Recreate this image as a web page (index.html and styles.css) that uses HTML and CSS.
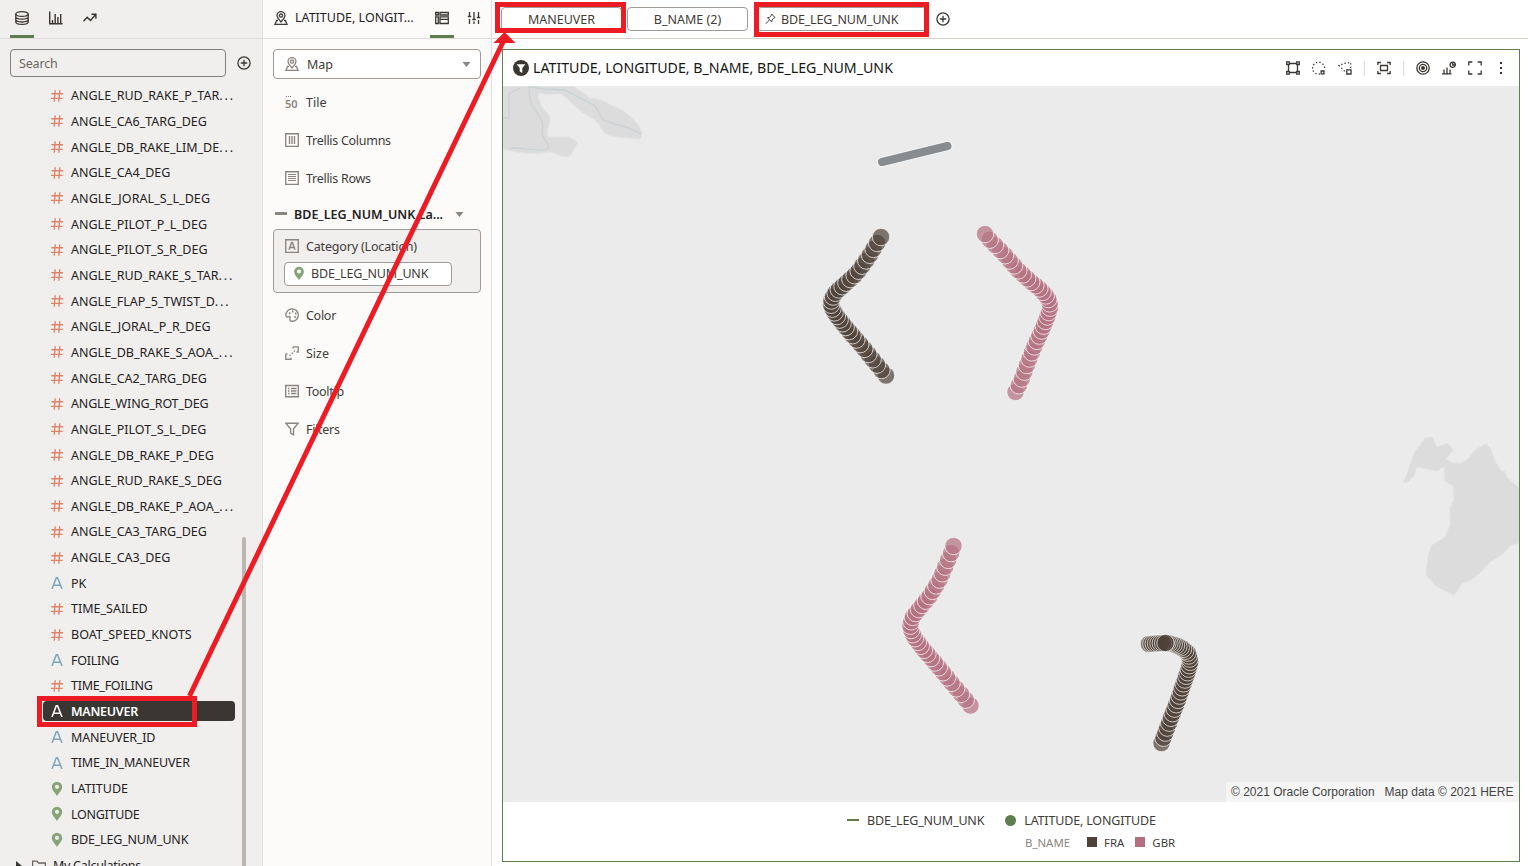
FILE: index.html
```
<!DOCTYPE html>
<html lang="en">
<head>
<meta charset="utf-8">
<title>Map visualization</title>
<link rel="stylesheet" href="styles.css">
</head>
<body>
<svg class="defs" width="0" height="0">
  <symbol id="num" viewBox="0 0 12 12"><path d="M4.2 .3 3.2 11.7M8.8 .3 7.8 11.7M.4 3.7H12M0 8.3H11.6" fill="none" stroke="currentColor" stroke-width="1.35"/></symbol>
  <symbol id="attr" viewBox="0 0 12 12"><path d="M1 12 5.3.7H6.5L11 12M2.7 8.3H9.4" fill="none" stroke="currentColor" stroke-width="1.5"/></symbol>
  <symbol id="pin" viewBox="0 0 12 16"><path fill-rule="evenodd" d="M6 .8A5.2 5.2 0 0 0 .8 6C.8 9.2 4 11.6 6 15 8 11.6 11.2 9.2 11.2 6A5.2 5.2 0 0 0 6 .8ZM6 3.7A2.1 2.1 0 1 1 6 7.9 2.1 2.1 0 0 1 6 3.7Z" fill="currentColor"/></symbol>
  <symbol id="plus" viewBox="0 0 14 14"><g fill="none" stroke="currentColor" stroke-width="1.3"><circle cx="7" cy="7" r="6.1"/><path d="M7 3.8V10.2M3.8 7H10.2"/></g></symbol>
  <symbol id="mapicon" viewBox="0 0 14 14"><g fill="none" stroke="currentColor" stroke-width="1.3"><path d="M7 11C5.800 8.900 3 7.300 3 4.600A4 4 0 0 1 11 4.600C11 7.300 8.200 8.900 7 11Z"/><circle cx="7" cy="4.600" r="1.600"/><path d="M4 9.500H2.600L1 13.300H13L11.400 9.500H10"/></g></symbol>
</svg>
<div class="app">
  <aside class="data">
    <header class="bar">
      <span class="tab on"><svg width="16" height="16" viewBox="0 0 16 16" fill="none" stroke="#3a3632" stroke-width="1.3"><ellipse cx="8" cy="4" rx="6.200" ry="2.400"/><path d="M1.800 4V12C1.800 15.200 14.200 15.200 14.200 12V4M1.800 6.800C1.800 10 14.200 10 14.200 6.800M1.800 9.600C1.800 12.800 14.200 12.800 14.200 9.600"/></svg></span>
      <span class="tab"><svg width="16" height="16" viewBox="0 0 16 16" fill="none" stroke="#3a3632" stroke-width="1.400"><path d="M1.700 1.500V13.800H14.500M4.500 13V10M7.200 13V4M9.900 13V7M12.700 13V4"/></svg></span>
      <span class="tab"><svg width="16" height="16" viewBox="0 0 16 16" fill="none" stroke="#3a3632" stroke-width="1.400"><path d="M1.500 11.300 5.200 7.200 8.500 10.500 13.600 4.500M9.500 4.300H13.900V8.700"/></svg></span>
    </header>
    <div class="find"><div class="search">Search</div><svg width="14" height="14"><use href="#plus"/></svg></div>
    <div class="rows">
      <div class="row n"><svg><use href="#num"/></svg><span>ANGLE_RUD_RAKE_P_TAR<span class="more">...</span></span></div>
      <div class="row n"><svg><use href="#num"/></svg><span>ANGLE_CA6_TARG_DEG</span></div>
      <div class="row n"><svg><use href="#num"/></svg><span>ANGLE_DB_RAKE_LIM_DE<span class="more">...</span></span></div>
      <div class="row n"><svg><use href="#num"/></svg><span>ANGLE_CA4_DEG</span></div>
      <div class="row n"><svg><use href="#num"/></svg><span class="wide">ANGLE_JORAL_S_L_DEG</span></div>
      <div class="row n"><svg><use href="#num"/></svg><span>ANGLE_PILOT_P_L_DEG</span></div>
      <div class="row n"><svg><use href="#num"/></svg><span>ANGLE_PILOT_S_R_DEG</span></div>
      <div class="row n"><svg><use href="#num"/></svg><span>ANGLE_RUD_RAKE_S_TAR<span class="more">...</span></span></div>
      <div class="row n"><svg><use href="#num"/></svg><span>ANGLE_FLAP_5_TWIST_D<span class="more">...</span></span></div>
      <div class="row n"><svg><use href="#num"/></svg><span>ANGLE_JORAL_P_R_DEG</span></div>
      <div class="row n"><svg><use href="#num"/></svg><span>ANGLE_DB_RAKE_S_AOA_<span class="more">...</span></span></div>
      <div class="row n"><svg><use href="#num"/></svg><span>ANGLE_CA2_TARG_DEG</span></div>
      <div class="row n"><svg><use href="#num"/></svg><span class="narrow">ANGLE_WING_ROT_DEG</span></div>
      <div class="row n"><svg><use href="#num"/></svg><span>ANGLE_PILOT_S_L_DEG</span></div>
      <div class="row n"><svg><use href="#num"/></svg><span>ANGLE_DB_RAKE_P_DEG</span></div>
      <div class="row n"><svg><use href="#num"/></svg><span>ANGLE_RUD_RAKE_S_DEG</span></div>
      <div class="row n"><svg><use href="#num"/></svg><span>ANGLE_DB_RAKE_P_AOA_<span class="more">...</span></span></div>
      <div class="row n"><svg><use href="#num"/></svg><span>ANGLE_CA3_TARG_DEG</span></div>
      <div class="row n"><svg><use href="#num"/></svg><span>ANGLE_CA3_DEG</span></div>
      <div class="row a"><svg><use href="#attr"/></svg><span>PK</span></div>
      <div class="row n"><svg><use href="#num"/></svg><span>TIME_SAILED</span></div>
      <div class="row n"><svg><use href="#num"/></svg><span>BOAT_SPEED_KNOTS</span></div>
      <div class="row a"><svg><use href="#attr"/></svg><span class="tight">FOILING</span></div>
      <div class="row n"><svg><use href="#num"/></svg><span class="tight">TIME_FOILING</span></div>
      <div class="row a sel"><svg><use href="#attr"/></svg><span class="tight">MANEUVER</span></div>
      <div class="row a"><svg><use href="#attr"/></svg><span class="narrow">MANEUVER_ID</span></div>
      <div class="row a"><svg><use href="#attr"/></svg><span class="narrow">TIME_IN_MANEUVER</span></div>
      <div class="row p"><svg><use href="#pin"/></svg><span>LATITUDE</span></div>
      <div class="row p"><svg><use href="#pin"/></svg><span class="tight">LONGITUDE</span></div>
      <div class="row p"><svg><use href="#pin"/></svg><span class="narrow">BDE_LEG_NUM_UNK</span></div>
      <div class="row calc"><svg class="caret" viewBox="0 0 6 10"><path d="M0 0 6 5 0 10Z" fill="#3a3632"/></svg><svg class="folder" viewBox="0 0 14 12"><path d="M.6 11.400V1.200H5L6.500 3H13.400V11.400Z" fill="none" stroke="#6b6661" stroke-width="1.300"/></svg><span class="tight">My Calculations</span></div>
    </div>
    <i class="thumb"></i>
  </aside>

  <section class="grammar">
    <header class="bar">
      <svg class="mi" width="14" height="14"><use href="#mapicon"/></svg>
      <span class="vizname">LATITUDE, LONGIT…</span>
      <span class="tab on"><svg width="14" height="14" viewBox="0 0 14 14" fill="none" stroke="#3a3632" stroke-width="1.300"><path d="M.7 1.500H3.300V4H.7ZM5 1.500H13.300V4H5ZM.7 5.800H3.300V12.500H.7ZM5 5.800H13.300V12.500H5ZM5 8.300H13.300"/></svg></span>
      <span class="tab sliders"><svg width="14" height="14" viewBox="0 0 14 14" fill="none" stroke="#3a3632" stroke-width="1.300"><path d="M2.500 1V5M2.500 8V13M.8 5.500H4.200M7 1V8M7 10.500V13M5.300 8.500H8.700M11.500 1V6M11.500 9V13M9.800 6.500H13.200"/></svg></span>
    </header>
    <div class="select"><svg width="14" height="14"><use href="#mapicon"/></svg><span>Map</span><svg class="dd" viewBox="0 0 8 5"><path d="M0 0H8L4 5Z" fill="#8b8580"/></svg></div>
    <div class="shelf"><span class="tileicon"><i></i>50</span><span>Tile</span></div>
    <div class="shelf"><svg viewBox="0 0 14 14"><path d="M.7.7H13.300V13.300H.7ZM4.500 3V11M7 3V11M9.500 3V11"/></svg><span class="tight">Trellis Columns</span></div>
    <div class="shelf"><svg viewBox="0 0 14 14"><path d="M.7.7H13.300V13.300H.7Z"/><path d="M3 3.500H11M3 5.500H11M3 7.500H11M3 9.500H11" stroke-width="1"/></svg><span class="tight">Trellis Rows</span></div>
    <div class="layer"><i></i><b>BDE_LEG_NUM_UNK La...</b><svg class="dd" viewBox="0 0 8 5"><path d="M0 0H8L4 5Z" fill="#8b8580"/></svg></div>
    <div class="category">
      <div class="cattitle"><svg viewBox="0 0 14 14"><path d="M.7.7H13.300V13.300H.7ZM4 10.700 6.600 3.500H7.400L10 10.700M5 8.500H9"/></svg><span class="narrow">Category (Location)</span></div>
      <div class="chip"><svg width="12" height="15"><use href="#pin"/></svg><span class="narrow">BDE_LEG_NUM_UNK</span></div>
    </div>
    <div class="shelf"><svg viewBox="0 0 14 14"><path d="M1 5.500C2 2.500 4.500.8 7.500.8A6.200 6.200 0 0 1 13.300 7C13.300 10.500 10.500 13.200 7.300 13.200C5 13.200 4.300 11.700 5 10.300C5.700 8.800 4.500 8 3.200 8.800C1.500 9.700.5 8 1 5.500Z"/><path d="M4 5.200H5.500M7 3.500H8.500M10 5.500H11.500M9.300 9H10.800" stroke-width="1.800"/></svg><span class="tight">Color</span></div>
    <div class="shelf"><svg viewBox="0 0 14 14"><path d="M8 .8H13.200V6H11.500M.8 8V13.200H6V11.500M.8 8H2.500M8 .8V2.500"/><path d="M4.500 9.700 10 4.500" stroke-dasharray="1.500 1.500"/></svg><span>Size</span></div>
    <div class="shelf"><svg viewBox="0 0 14 14"><path d="M.7 1.500H13.300V12.700H.7ZM3 4.500H4.500M6 4.500H11.500M3 7H4.500M6 7H11.500M3 9.500H4.500M6 9.500H11.500"/></svg><span class="tight">Tooltip</span></div>
    <div class="shelf"><svg viewBox="0 0 14 14"><path d="M.9 1.200H13.100L8.500 7V12.800L5.600 11V7Z"/></svg><span class="tight">Filters</span></div>
  </section>

  <main class="canvas">
    <header class="filters">
      <span class="pill">MANEUVER</span><span class="pill">B_NAME (2)</span>
      <span class="pill pinned"><svg width="11" height="12" viewBox="0 0 11 12" fill="none" stroke="#4a4642"><path d="M6.500 1 10 4.500 8.800 5 7 7 6.800 9 2.500 4.700 4.600 4.400 6.300 2.500ZM4.500 6.800.8 10.800"/></svg><span class="narrow">BDE_LEG_NUM_UNK</span></span>
      <svg class="add" width="14" height="14"><use href="#plus"/></svg>
    </header>
    <article class="viz">
      <div class="vizbar">
        <svg class="funnel" width="16" height="16" viewBox="0 0 16 16"><circle cx="8" cy="8" r="8" fill="#3a3632"/><path d="M3.600 4.200H12.400L9.300 8V13L6.700 11.500V8Z" fill="#fff"/></svg>
        <h1>LATITUDE, LONGITUDE, B_NAME, BDE_LEG_NUM_UNK</h1>
        <div class="tools">
          <svg viewBox="0 0 14 14"><path d="M2.500 2.500H11.500V11.500H2.500Z"/><path d="M.7.9H3.300V3.500H.7ZM10.700.9H13.300V3.500H10.700ZM.7 10.500H3.300V13.100H.7ZM10.700 10.500H13.300V13.100H10.700Z" fill="#fff"/></svg>
          <svg viewBox="0 0 14 14"><path d="M8 13A6 6 0 1 1 12.500 8" stroke-dasharray="1.300 2.200"/><path d="M9.200 10H12V12.800H9.200Z"/></svg>
          <svg viewBox="0 0 14 14"><path d="M12.700 7V1.500L6 2.500 1 4.500 7 10.500" stroke-dasharray="1.300 2.200"/><path d="M8.800 8.800H13V13H8.800Z"/></svg>
          <i></i>
          <svg viewBox="0 0 14 14"><path d="M.8 4V1.500H4M10 1.500H13.200V4M13.200 10V12.500H10M4 12.500H.8V10M3.500 4.500H10.500V9.500H3.500Z"/></svg>
          <i></i>
          <svg viewBox="0 0 14 14"><circle cx="7" cy="7" r="6.200"/><circle cx="7" cy="7" r="3.700"/><circle cx="7" cy="7" r="1.300" fill="#3a3632"/></svg>
          <svg viewBox="0 0 14 14"><path d="M0 12.800H9.500M2 12.500V8.500M5 12.500V6.500M8 12.500V8.500"/><circle cx="10.700" cy="3.800" r="2.600"/><path d="M10.700 1V4H13.500"/></svg>
          <svg viewBox="0 0 14 14"><path d="M.8 4.500V1H4.300M9.700 1H13.200V4.500M13.200 9.500V13H9.700M4.300 13H.8V9.500"/></svg>
          <svg viewBox="0 0 14 14"><path d="M6 1H8V3H6ZM6 6H8V8H6ZM6 11H8V13H6Z" fill="#3a3632" stroke="none"/></svg>
        </div>
      </div>
      <div class="map">
        <svg class="mapsvg" viewBox="503 86 1016 716">
          <g fill="#dcdcdc" stroke="#e3e3e3" stroke-width="1" stroke-linejoin="round">
            <path d="M503 86H573Q580 91 587 95L590 99C596 97 602 100 609 104L624 111 637 123C643 131 642 137 640 139C630 138 614 138 606 134 C601 130 600 124 594 119 C579 113 570 100 562 94 C554 93 546 96 542 93 C536 92 538 97 540 103 C542 110 550 114 550 118 C550 126 546 129 548 137 L568 137 578 142 573 151 569 157 561 156 551 152 C532 155 518 153 503 149Z"/>
            <path d="M1403 483 1408 471 1414 453 1425 438 1432 437 1437 447 1448 443 1453 450 1446 459 1454 463H1462L1468 459 1476 449 1486 444 1491 449 1495 461 1501 471H1505L1507 477 1519 488V543L1510 546 1503 554 1490 562 1480 573 1471 580 1462 583 1458 590 1454 595 1445 591 1436 586 1426 575 1428 555 1432 545 1445 537 1450 525V508L1454 499 1453 486 1445 481 1444 466 1438 471 1417 467 1414 476 1408 482Z"/>
          </g>
          <path d="M503 118H509V94L520 88M529 86Q529 105 535 110C539 116 545 122 542 132C541 140 550 141 548 148C545 153 530 148 509 148M530 87 545 89 565 90 595 106 603 120 614 124 624 126 641 134" fill="none" stroke="#cbd2d6" stroke-width="1.400"/>
          <path d="M882 162 947.500 146" stroke="#f8f8f8" stroke-width="10" stroke-linecap="round"/>
          <path d="M882 162 947.500 146" stroke="#868c90" stroke-width="8" stroke-linecap="round"/>
          <g id="trails"></g>
        </svg>
        <div class="credit"><span>© 2021 Oracle Corporation</span><span>Map data © 2021 HERE</span></div>
      </div>
      <div class="legend">
        <div class="leg1"><i class="dash"></i><span class="narrow">BDE_LEG_NUM_UNK</span><i class="dot"></i><span class="narrow">LATITUDE, LONGITUDE</span></div>
        <div class="leg2"><span class="muted">B_NAME</span><i class="sq fra"></i><span>FRA</span><i class="sq gbr"></i><span>GBR</span></div>
      </div>
    </article>
  </main>
</div>
<svg class="marks" viewBox="0 0 1528 866" fill="none" stroke="#ed1c24" stroke-width="5">
  <rect x="497.500" y="4.500" width="126" height="26"/>
  <rect x="756.500" y="4.500" width="170" height="30"/>
  <rect x="39.500" y="698.500" width="155" height="26"/>
  <path d="M189.500 696 503 42"/>
  <path d="M504.500 32 515.500 43H493.500Z" fill="#ed1c24" stroke="none"/>
</svg>
<script src="trails.js"></script>
</body>
</html>
```
FILE: styles.css
```
*{box-sizing:border-box}
body{margin:0;width:1528px;height:866px;overflow:hidden;font:12.5px "Noto Sans",sans-serif;color:#24211f;background:#fff}
svg{flex:none;display:block}
.defs{position:absolute}
.narrow{letter-spacing:-.17px}
.tight{letter-spacing:-.28px}
.wide{letter-spacing:.08px}
.more{letter-spacing:1.9px}
.app{display:flex;height:866px}
.bar{height:39px;display:flex;border-bottom:1px solid #dfdcd9}
.tab{width:24px;height:38px;display:flex;align-items:center;justify-content:center;padding-bottom:2px}
.tab.on{border-bottom:3px solid #5f7d4f;padding-bottom:0}
.data{width:262px;background:#f0efed;position:relative;overflow:hidden;flex:none}
.data .bar{padding-left:10px;gap:10px}
.find{display:flex;align-items:center;gap:10.5px;padding:10px 0 0 10px;color:#3a3632}
.search{width:216px;height:28px;border:1px solid #85817d;border-radius:4px;padding-left:8px;line-height:28px;color:#6b6661;letter-spacing:-.15px}
.rows{padding-top:6px}
.row{height:25.66px;display:flex;align-items:center;padding-left:51px;white-space:nowrap}
.row svg{width:12px;height:12px;margin-right:8px}
.row.p svg{height:16px}
.n svg{color:#de8268}
.a svg{color:#7ba5be}
.p svg,.chip svg{color:#86a478}
.row.sel{color:#fff;font-weight:600;height:20px;margin:2.33px 27px 3.33px 43px;padding-left:8px;background:#3a3632;border-radius:4px}
.row.sel svg{color:#fff}
.row.calc{padding-left:16px}
.row.calc .caret{width:6px;height:10px;margin-right:10px}
.row.calc .folder{width:14px;height:12px;margin-right:7px}
.thumb{position:absolute;left:242px;top:537px;width:4px;height:340px;border-radius:2px;background:#bcb6b1}
.grammar{width:230px;background:#fcfbfa;border:solid #e0dfdd;border-width:0 1px;flex:none;color:#3f3b38}
.grammar .bar{padding-left:11px;align-items:flex-start}
.mi{margin-top:11px}
.vizname{width:142px;padding-left:7px;line-height:36px;color:#24211f;white-space:nowrap}
.bar .sliders{margin-left:8px}
.select{margin:10px 10px 4px;width:208px;height:30px;border:1px solid #a09b96;border-radius:4px;background:#fff;display:flex;align-items:center;padding:0 9px 0 11px;gap:8px}
.select>svg:first-child{color:#8b8580}
.dd{width:9px;height:5px}
.select .dd{margin-left:auto}
.shelf{height:38px;display:flex;align-items:center;padding-left:22px;gap:7px}
.shelf svg,.cattitle svg{width:14px;height:14px;fill:none;stroke:#8b8580;stroke-width:1.35}
.tileicon{width:14px;font-size:11px;font-weight:600;color:#8b8580;line-height:12px;position:relative;padding-top:3px}
.tileicon i{position:absolute;left:1px;top:1px;width:5px;border-top:1px dotted #8b8580}
.layer{height:32px;display:flex;align-items:center;padding:2px 0 0 12px;color:#24211f;white-space:nowrap}
.layer i{width:12px;height:3px;margin:-2px 7px 0 0;background:#8b8580}
.layer b{width:161px;font-weight:600}
.category{width:208px;height:64px;margin:0 10px 3px;border:1px solid #a09b96;border-radius:4px;background:#f0efed;padding:6px 0 0 10px}
.cattitle{display:flex;align-items:center;gap:7px;height:20px;padding-left:1px}
.chip{width:168px;height:24px;margin-top:6px;border:1px solid #a09b96;border-radius:4px;background:#fff;display:flex;align-items:center;padding:0 0 1px 8px;gap:6px}
.canvas{flex:1;min-width:0}
.filters{height:39px;border-bottom:1px solid #d4d1cb;display:flex;padding:7px 0 0 9px}
.pill{width:121px;height:24px;border:1px solid #a09b96;border-radius:4px;margin-right:5px;display:flex;align-items:center;justify-content:center;color:#3f3b38}
.pinned{width:170px;justify-content:flex-start;margin-left:4px;padding-left:7px;gap:5px}
.add{margin:5px 0 0 4px;color:#3a3632}
.viz{margin:10px 0 0 10px;width:1018px;height:813px;border:1px solid #5f7d4f;display:flex;flex-direction:column}
.vizbar{height:36px;display:flex;align-items:center;padding-left:10px}
h1{font-size:14.2px;font-weight:400;margin:0 0 1px 4px;white-space:nowrap;color:#161513}
.tools{display:flex;align-items:center;margin-left:auto;padding-right:11px;gap:12px}
.tools svg{width:14px;height:14px;fill:none;stroke:#3a3632;stroke-width:1.3}
.tools i{width:1px;height:15px;background:#dedbd8}
.map{height:716px;background:#ebebeb;position:relative}
.mapsvg{width:1016px;height:716px}
.credit{position:absolute;right:0;bottom:0;width:293px;height:20px;background:#f5f5f5;font:12px/20px "Liberation Sans",sans-serif;color:#444;display:flex;gap:10px;padding-left:5px;white-space:nowrap}
.legend{padding-top:7px;color:#3f3b38}
.leg1,.leg2{display:flex;align-items:center;height:22px}
.leg1{padding-left:344px}
.dash{width:12px;height:2px;background:#5f7d4f;margin-right:8px}
.dot{width:11px;height:11px;border-radius:50%;background:#5f7d4f;margin:0 8px 0 21px}
.leg2{padding-left:522px;font-size:11.4px}
.muted{color:#8b8580}
.sq{width:10px;height:10px;margin:0 7px 0 17px}
.fra{background:#4f4239}
.gbr{background:#b4707f;margin-left:11px}
.marks{position:absolute;left:0;top:0;width:1528px;height:866px;pointer-events:none}
```
FILE: trails.js
```
// Boat positions: route points, number of samples, slowdown around the turn, colour
const BROWN = "#4f4239", PINK = "#b4707f";
const routes = [
  {c: BROWN, n: 32, k: .25, p: [[886,375.5],[874,361],[862,346],[848,330],[836,315],[831,306],[831.5,299],[836,292],[845,284],[857,273],[868,258],[879,240],[881,237]]},
  {c: PINK, n: 33, k: .25, p: [[1015.5,392],[1021,381],[1028,362],[1035,345],[1042,330],[1048,315],[1050.5,306],[1048,298],[1040,289],[1030,281],[1018,270],[1004,254],[988,238],[985,234]]},
  {c: PINK, n: 33, k: .25, p: [[970.5,705.5],[961,694],[950,681],[937,665],[924,650],[914,637],[910,627],[912,618],[919,609],[929,597],[939,581],[946,565],[952,551],[953.5,546]]},
  {c: BROWN, n: 33, ease: true, p: [[1161.5,743],[1166,731],[1172,715],[1178,700],[1183,685],[1188,671],[1190.5,661],[1188,653],[1182,648],[1175,645],[1168,643],[1165.5,643]]},
  {c: BROWN, n: 8, k: 0, p: [[1149,644],[1156,643.5],[1165.5,643]]}
];
const NS = "http://www.w3.org/2000/svg";
const layer = document.getElementById("trails");
for (const r of routes) {
  const lens = [0];
  for (let i = 1; i < r.p.length; i++)
    lens.push(lens[i-1] + Math.hypot(r.p[i][0]-r.p[i-1][0], r.p[i][1]-r.p[i-1][1]));
  const total = lens[lens.length-1];
  for (let j = 0; j < r.n; j++) {
    let t = j / (r.n - 1);
    t = r.ease ? 1.5*t - .5*t*t : t + r.k * Math.sin(2*Math.PI*t) / (2*Math.PI);
    const s = Math.min(t, 1) * total;
    let i = 1;
    while (i < lens.length-1 && lens[i] < s) i++;
    const f = (s - lens[i-1]) / (lens[i] - lens[i-1]);
    const e = document.createElementNS(NS, "circle");
    e.setAttribute("cx", r.p[i-1][0] + f*(r.p[i][0]-r.p[i-1][0]));
    e.setAttribute("cy", r.p[i-1][1] + f*(r.p[i][1]-r.p[i-1][1]));
    e.setAttribute("r", 8.7);
    e.setAttribute("fill", r.c);
    e.setAttribute("fill-opacity", .7);
    e.setAttribute("stroke", "#fff");
    e.setAttribute("stroke-opacity", .7);
    layer.append(e);
  }
}
```
